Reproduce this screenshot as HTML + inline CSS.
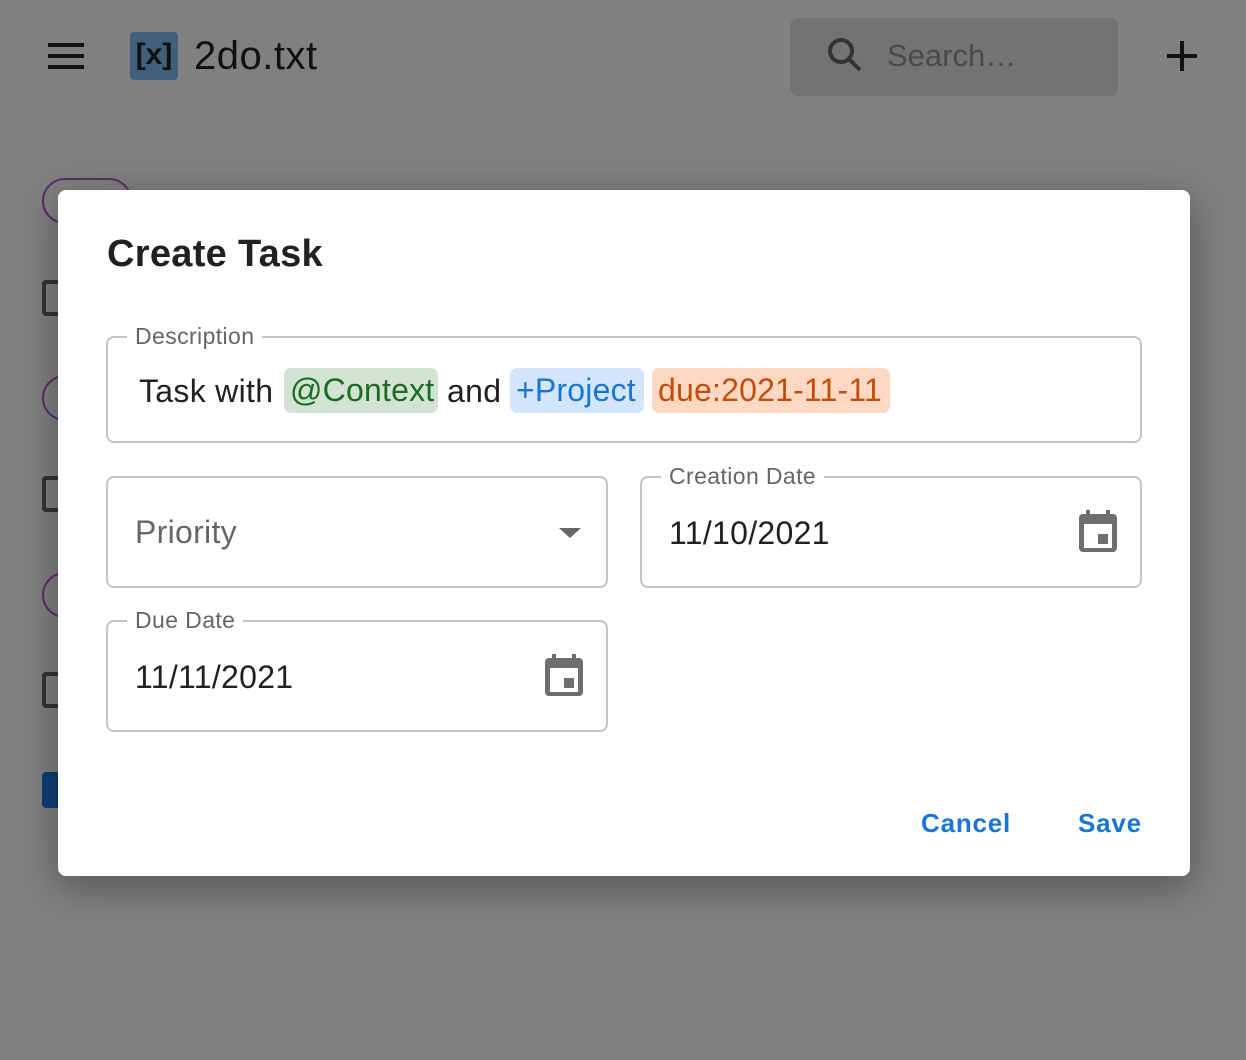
<!DOCTYPE html>
<html><head><style>
*{margin:0;padding:0;box-sizing:border-box}
body{width:1246px;height:1060px;background:#808080;font-family:"Liberation Sans",sans-serif;position:relative;overflow:hidden}
.a{position:absolute}
.field{position:absolute;border:2px solid #c4c4c4;border-radius:8px}
.lbl{position:absolute;top:-16px;background:#fff;padding:0 8px;font-size:23px;letter-spacing:0.4px;color:#666;line-height:28px}
.val{position:absolute;font-size:32px;color:#212121;white-space:nowrap;letter-spacing:0.3px}
.chip{position:absolute;top:368px;height:45px;border-radius:7px;font-size:32px;line-height:45px;padding:0 6px;white-space:nowrap;letter-spacing:0.2px}
.btn{position:absolute;top:808px;font-size:26px;color:#1976d2;font-weight:bold;letter-spacing:0.8px}
</style></head><body>
<div class="a" style="left:48px;top:43px;width:36px;height:4px;background:#111"></div>
<div class="a" style="left:48px;top:54px;width:36px;height:4px;background:#111"></div>
<div class="a" style="left:48px;top:65px;width:36px;height:4px;background:#111"></div>
<div class="a" style="left:130px;top:32px;width:48px;height:48px;background:#3f5f7a;border-radius:4px;font:bold 30px 'Liberation Sans',sans-serif;color:#111;text-align:center;line-height:46px">[x]</div>
<div class="a" style="left:194px;top:32px;font-size:40px;color:#111;line-height:48px;letter-spacing:0.5px">2do.txt</div>
<div class="a" style="left:790px;top:18px;width:328px;height:78px;background:#737373;border-radius:8px"></div>
<svg class="a" style="left:826px;top:36px" width="38" height="38" viewBox="0 0 38 38"><circle cx="15" cy="15" r="11" fill="none" stroke="#333" stroke-width="4"/><line x1="23" y1="23" x2="34" y2="34" stroke="#333" stroke-width="4"/></svg>
<div class="a" style="left:887px;top:38px;font-size:31px;color:#4a4a4a">Search…</div>
<div class="a" style="left:1167px;top:54px;width:30px;height:4px;background:#111"></div>
<div class="a" style="left:1180px;top:41px;width:4px;height:30px;background:#111"></div>
<div class="a" style="left:42px;top:178px;width:90px;height:46px;border:2px solid #5e2a6a;border-radius:23px"></div>
<div class="a" style="left:42px;top:280px;width:30px;height:36px;border:4px solid #333;border-radius:4px"></div>
<div class="a" style="left:42px;top:375px;width:90px;height:46px;border:2px solid #5e2a6a;border-radius:23px"></div>
<div class="a" style="left:42px;top:476px;width:30px;height:36px;border:4px solid #333;border-radius:4px"></div>
<div class="a" style="left:42px;top:572px;width:90px;height:46px;border:2px solid #5e2a6a;border-radius:23px"></div>
<div class="a" style="left:42px;top:672px;width:30px;height:36px;border:4px solid #333;border-radius:4px"></div>
<div class="a" style="left:42px;top:772px;width:30px;height:36px;background:#0d3f73;border-radius:4px"></div>
<div class="a" style="left:58px;top:190px;width:1132px;height:686px;background:#fff;border-radius:8px;box-shadow:0 10px 40px rgba(0,0,0,0.35)"></div>
<div class="a" style="left:107px;top:230px;font-size:38px;font-weight:bold;color:#212121;line-height:48px;letter-spacing:0.3px">Create Task</div>

<div class="field" style="left:106px;top:336px;width:1036px;height:107px"><div class="lbl" style="left:19px">Description</div></div>
<div class="val" style="left:139px;top:372px;line-height:38px">Task with</div>
<div class="chip" style="left:284px;width:154px;background:#d2e2d3;color:#1b6b23">@Context</div>
<div class="val" style="left:447px;top:372px;line-height:38px">and</div>
<div class="chip" style="left:510px;width:134px;background:#d3e5fb;color:#1976d2">+Project</div>
<div class="chip" style="left:652px;width:238px;background:#fdd9c4;color:#c24e0a">due:2021-11-11</div>

<div class="field" style="left:106px;top:476px;width:502px;height:112px"></div>
<div class="val" style="left:135px;top:513px;color:#666;line-height:38px">Priority</div>
<div class="a" style="left:559px;top:528px;width:0;height:0;border-left:11px solid transparent;border-right:11px solid transparent;border-top:10px solid #666"></div>

<div class="field" style="left:640px;top:476px;width:502px;height:112px"><div class="lbl" style="left:19px">Creation Date</div></div>
<div class="val" style="left:669px;top:514px;line-height:38px">11/10/2021</div>
<svg class="a" style="left:1079px;top:510px" width="38" height="42" viewBox="0 0 38 42"><rect x="7" y="0" width="4" height="6" fill="#6e6e6e"/><rect x="27" y="0" width="4" height="6" fill="#6e6e6e"/><rect x="0" y="4" width="38" height="38" rx="4" fill="#6e6e6e"/><rect x="5" y="14" width="28" height="24" fill="#fff"/><rect x="19" y="24" width="10" height="10" fill="#6e6e6e"/></svg>

<div class="field" style="left:106px;top:620px;width:502px;height:112px"><div class="lbl" style="left:19px">Due Date</div></div>
<div class="val" style="left:135px;top:658px;line-height:38px">11/11/2021</div>
<svg class="a" style="left:545px;top:654px" width="38" height="42" viewBox="0 0 38 42"><rect x="7" y="0" width="4" height="6" fill="#6e6e6e"/><rect x="27" y="0" width="4" height="6" fill="#6e6e6e"/><rect x="0" y="4" width="38" height="38" rx="4" fill="#6e6e6e"/><rect x="5" y="14" width="28" height="24" fill="#fff"/><rect x="19" y="24" width="10" height="10" fill="#6e6e6e"/></svg>

<div class="btn" style="left:921px">Cancel</div>
<div class="btn" style="left:1078px">Save</div>
</body></html>
